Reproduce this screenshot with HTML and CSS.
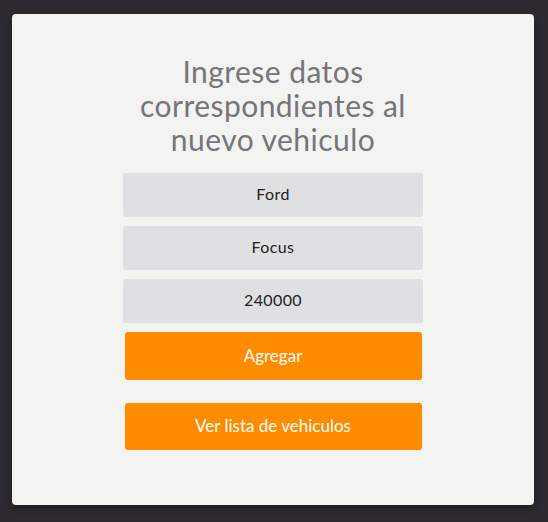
FILE: index.html
```html
<!DOCTYPE html>
<html lang="es">
<head>
<meta charset="utf-8">
<link rel="stylesheet" href="styles.css">
</head>
<body>
<div class="card">
  <h1 class="title">Ingrese datos correspondientes al nuevo vehiculo</h1>
  <form class="form">
    <input class="field" type="text" value="Ford">
    <input class="field" type="text" value="Focus">
    <input class="field" type="text" value="240000">
    <button class="btn btn-add" type="button">Agregar</button>
    <button class="btn btn-list" type="button">Ver lista de vehiculos</button>
  </form>
</div>
</body>
</html>
```
FILE: styles.css
```css
html, body {
  margin: 0;
  padding: 0;
  background: #2c2a30;
  height: 100%;
}
body {
  font-family: "Lato", "Open Sans", sans-serif;
  padding: 14px 14px 0 12px;
  box-sizing: border-box;
}
.card {
  width: 522px;
  height: 491px;
  background: #f3f3f1;
  border-radius: 4px;
  box-shadow: 0 3px 6px rgba(0,0,0,0.35);
  display: flex;
  flex-direction: column;
  align-items: center;
  box-sizing: border-box;
  padding-top: 40px;
}
.title {
  margin: 0 0 17px;
  width: 300px;
  text-align: center;
  font-weight: 400;
  font-size: 30px;
  line-height: 34px;
  letter-spacing: 0.45px;
  color: #75757a;
}
.form {
  width: 300px;
  display: flex;
  flex-direction: column;
  align-items: center;
}
.field {
  width: 300px;
  height: 44px;
  box-sizing: border-box;
  border: none;
  border-radius: 3px;
  background: #dfe0e2;
  text-align: center;
  font-family: inherit;
  font-size: 16px;
  letter-spacing: 0.4px;
  color: #222;
  margin-bottom: 9px;
  padding: 0 0 3px;
  outline: none;
}
.btn {
  width: 297px;
  border: none;
  border-radius: 3px;
  background: #ff8c00;
  color: #fff;
  font-family: inherit;
  font-size: 17px;
  padding: 0 0 2px;
  cursor: pointer;
}
.btn-add {
  height: 48px;
  margin-bottom: 23px;
}
.btn-list {
  height: 47px;
}
```
